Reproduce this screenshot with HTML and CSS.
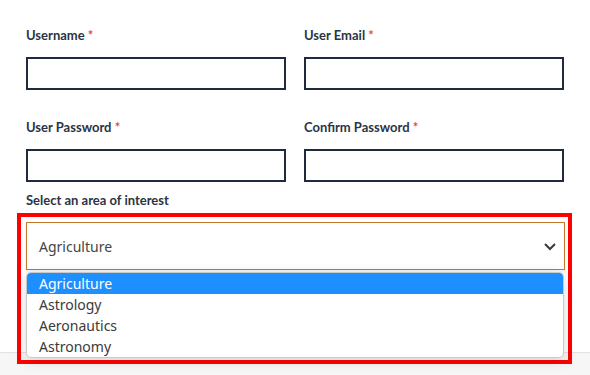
FILE: index.html
```html
<!DOCTYPE html>
<html lang="en">
<head>
<meta charset="utf-8">
<title>Register</title>
<link rel="stylesheet" href="styles.css">
</head>
<body>
<form class="form">
  <div class="grid">
    <div class="field">
      <label class="label">Username <span class="req">*</span></label>
      <div class="input"></div>
    </div>
    <div class="field">
      <label class="label">User Email <span class="req">*</span></label>
      <div class="input"></div>
    </div>
    <div class="field">
      <label class="label">User Password <span class="req">*</span></label>
      <div class="input"></div>
    </div>
    <div class="field">
      <label class="label">Confirm Password <span class="req">*</span></label>
      <div class="input"></div>
    </div>
  </div>
  <label class="label select-label">Select an area of interest</label>
  <div class="highlight">
    <div class="select">
      <span class="select-value">Agriculture</span>
      <svg class="chevron" width="14" height="10" viewBox="0 0 14 10"><polyline points="2,3 7,8 12,3" fill="none" stroke="#3a3a3a" stroke-width="2"/></svg>
    </div>
    <ul class="options">
      <li class="option selected">Agriculture</li>
      <li class="option">Astrology</li>
      <li class="option">Aeronautics</li>
      <li class="option">Astronomy</li>
    </ul>
  </div>
</form>
</body>
</html>
```
FILE: styles.css
```css
html, body {
  margin: 0;
  padding: 0;
}
body {
  width: 590px;
  height: 375px;
  overflow: hidden;
  font-family: Lato, "Open Sans", sans-serif;
  background: linear-gradient(to bottom, #ffffff 0, #ffffff 352px, #e2e2e2 352px, #e2e2e2 353px, #f6f6f6 353px);
}
.form {
  padding: 27px 0 0 17px;
}
.grid {
  display: grid;
  grid-template-columns: 260px 260px;
  column-gap: 18px;
  row-gap: 29px;
  margin-left: 9px;
}
.field {
  display: flex;
  flex-direction: column;
}
.label {
  display: block;
  font-size: 13px;
  line-height: 16px;
  font-weight: 700;
  color: #2b3445;
  margin-bottom: 14px;
}
.req {
  color: #e8464f;
}
.input {
  height: 29px;
  border: 2px solid #1f2b3c;
  background: #fff;
}
.select-label {
  margin: 10px 0 5px 9px;
}
.highlight {
  width: 539px;
  border: 4px solid #ff0000;
  padding: 5px 3px 2px 5px;
}
.select {
  height: 46px;
  border: 1px solid #c7762d;
  background: #fff;
  display: flex;
  align-items: center;
  justify-content: space-between;
  padding: 0 7px 0 12px;
  box-shadow: 0 2px 3px rgba(0,0,0,0.06);
}
.select-value {
  font-family: "Noto Sans", "Open Sans", sans-serif;
  font-size: 14px;
  color: #444;
}
.chevron {
  display: block;
}
.options {
  list-style: none;
  margin: 2px 1px 0 0;
  padding: 0;
  background: #fff;
  border: 1px solid #c9c9c9;
  border-radius: 5px;
  overflow: hidden;
  box-shadow: 0 3px 14px rgba(0,0,0,0.14);
}
.option {
  font-family: "Noto Sans", "Open Sans", sans-serif;
  font-size: 14px;
  line-height: 21px;
  height: 21px;
  padding-left: 12px;
  color: #3a3a3a;
}
.option.selected {
  background: #1e8fff;
  color: #fff;
}
```
